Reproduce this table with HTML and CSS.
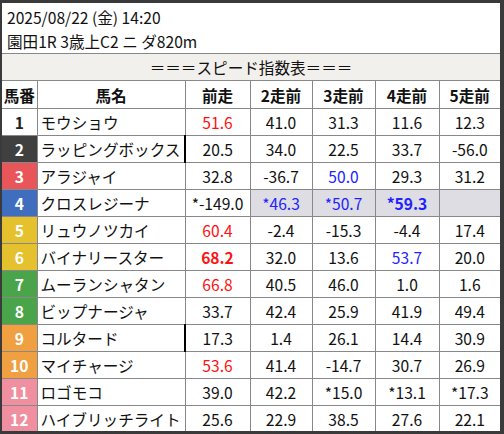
FILE: index.html
```html
<!DOCTYPE html>
<html lang="ja">
<head>
<meta charset="utf-8">
<link rel="stylesheet" href="styles.css">
</head>
<body>
<div class="frame">
  <div class="info">
    <div class="line">2025/08/22 (金) 14:20</div>
    <div class="line">園田1R 3歳上C2 ニ ダ820m</div>
  </div>
  <table class="speed">
    <colgroup>
      <col class="c-no"><col class="c-name"><col class="c-v1"><col class="c-v2"><col class="c-v3"><col class="c-v4"><col class="c-v5">
    </colgroup>
    <tr class="title"><td colspan="7">＝＝＝スピード指数表＝＝＝</td></tr>
    <tr class="head"><th>馬番</th><th>馬名</th><th>前走</th><th>2走前</th><th>3走前</th><th>4走前</th><th>5走前</th></tr>
    <tr><td class="no w1">1</td><td class="name">モウショウ</td><td class="red">51.6</td><td>41.0</td><td>31.3</td><td>11.6</td><td>12.3</td></tr>
    <tr><td class="no w2">2</td><td class="name mark">ラッピングボックス</td><td>20.5</td><td>34.0</td><td>22.5</td><td>33.7</td><td>-56.0</td></tr>
    <tr><td class="no w3">3</td><td class="name">アラジャイ</td><td>32.8</td><td>-36.7</td><td class="blue">50.0</td><td>29.3</td><td>31.2</td></tr>
    <tr><td class="no w4">4</td><td class="name">クロスレジーナ</td><td>*-149.0</td><td class="grey blue">*46.3</td><td class="grey blue">*50.7</td><td class="grey blue bold">*59.3</td><td class="grey"></td></tr>
    <tr><td class="no w5">5</td><td class="name">リュウノツカイ</td><td class="red">60.4</td><td>-2.4</td><td>-15.3</td><td>-4.4</td><td>17.4</td></tr>
    <tr><td class="no w5">6</td><td class="name">バイナリースター</td><td class="red bold">68.2</td><td>32.0</td><td>13.6</td><td class="blue">53.7</td><td>20.0</td></tr>
    <tr><td class="no w6">7</td><td class="name">ムーランシャタン</td><td class="red">66.8</td><td>40.5</td><td>46.0</td><td>1.0</td><td>1.6</td></tr>
    <tr><td class="no w6">8</td><td class="name">ビップナージャ</td><td>33.7</td><td>42.4</td><td>25.9</td><td>41.9</td><td>49.4</td></tr>
    <tr><td class="no w7">9</td><td class="name mark">コルタード</td><td>17.3</td><td>1.4</td><td>26.1</td><td>14.4</td><td>30.9</td></tr>
    <tr><td class="no w7">10</td><td class="name">マイチャージ</td><td class="red">53.6</td><td>41.4</td><td>-14.7</td><td>30.7</td><td>26.9</td></tr>
    <tr><td class="no w8">11</td><td class="name">ロゴモコ</td><td>39.0</td><td>42.2</td><td>*15.0</td><td>*13.1</td><td>*17.3</td></tr>
    <tr><td class="no w8">12</td><td class="name">ハイブリッチライト</td><td>25.6</td><td>22.9</td><td>38.5</td><td>27.6</td><td>22.1</td></tr>
  </table>
</div>
</body>
</html>
```
FILE: styles.css
```css
html, body {
  margin: 0;
  padding: 0;
  background: #ffffff;
}
body {
  font-family: "Noto Sans CJK JP", "Noto Sans", sans-serif;
  font-size: 15.6px;
  color: #111;
}
.frame {
  width: 498px;
  height: 428px;
  border-style: solid;
  border-color: #3a3a3a;
  border-width: 3px 4px 3px 2px;
  overflow: hidden;
}
.info {
  padding: 2px 0 0 5px;
  height: 48px;
  border-bottom: 1px solid #888;
}
.line {
  height: 24px;
  line-height: 24px;
  white-space: nowrap;
}
.speed {
  width: 498px;
  table-layout: fixed;
  border-collapse: collapse;
  border-style: hidden;
}
.c-no { width: 35px; }
.c-name { width: 148px; }
.c-v1 { width: 65px; }
.c-v2 { width: 62px; }
.c-v3 { width: 63px; }
.c-v4 { width: 64px; }
.c-v5 { width: 61px; }
.speed td, .speed th {
  border: 1px solid #888;
  padding: 0;
  text-align: center;
  white-space: nowrap;
  overflow: hidden;
  height: 26px;
  line-height: 26px;
}
.speed tr.title td {
  background: #f1f0ec;
  height: 26px;
}
.speed tr.head th {
  font-weight: bold;
  height: 27px;
}
.speed td.name {
  text-align: left;
  padding-left: 3px;
}
.speed td.mark {
  border-right: 2px solid #000;
}
.no {
  font-weight: bold;
  color: #fff;
}
.w1 { background: #fff; color: #222; }
.w2 { background: #404040; }
.w3 { background: #e8565a; }
.w4 { background: #3f6ebf; }
.w5 { background: #e6c12e; }
.w6 { background: #4aa54a; }
.w7 { background: #f0a040; }
.w8 { background: #f08fa0; }
.red { color: #ff1010; }
.blue { color: #2222ff; }
.bold { font-weight: bold; }
.grey { background: #dddde3; }
```
